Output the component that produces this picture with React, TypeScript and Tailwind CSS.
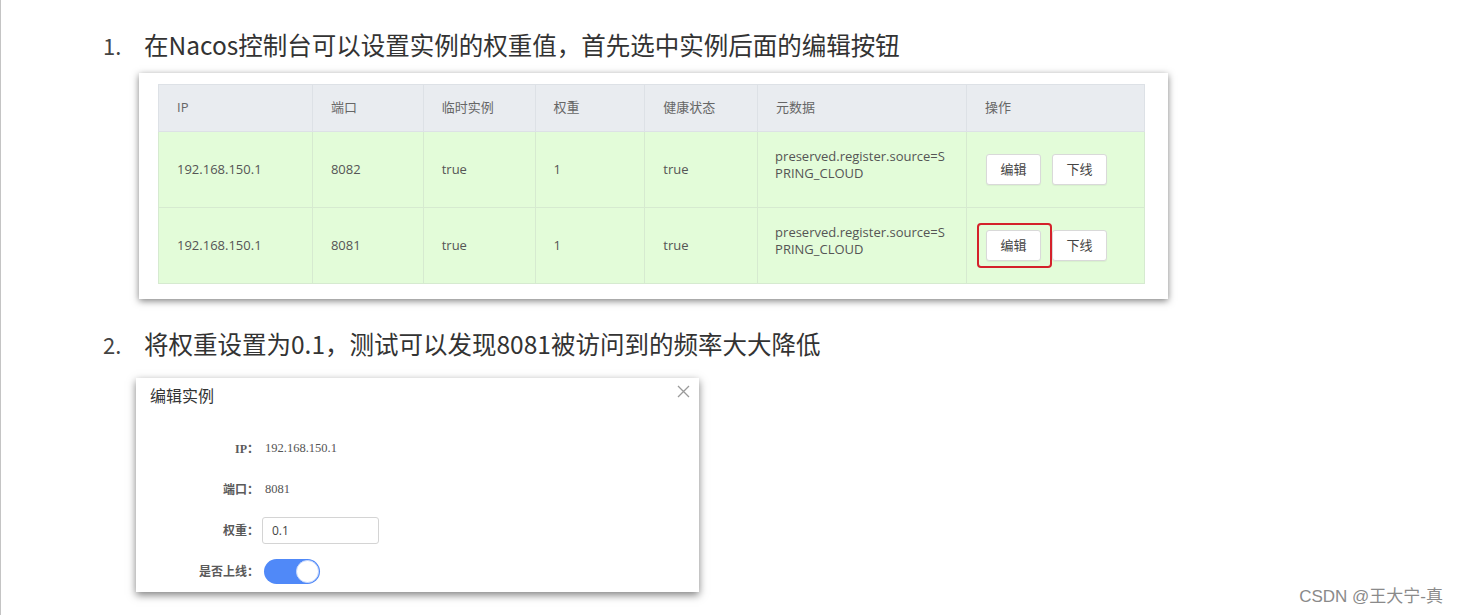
const cols = [
  { title: "IP", w: "w-[154px]" },
  { title: "端口", w: "w-[111px]" },
  { title: "临时实例", w: "w-[112px]" },
  { title: "权重", w: "w-[110px]" },
  { title: "健康状态", w: "w-[113px]" },
  { title: "元数据", w: "w-[209px]" },
  { title: "操作", w: "w-[178px]" },
];

const rows = [
  { ip: "192.168.150.1", port: "8082", highlight: false },
  { ip: "192.168.150.1", port: "8081", highlight: true },
];

function Btn({ label }: { label: string }) {
  return (
    <button className="w-[55px] h-[31px] bg-white border border-[#d9d9d9] rounded-[3px] text-[13px] text-[#444] shadow-[0_1px_1px_rgba(0,0,0,0.05)]">
      {label}
    </button>
  );
}

function InstanceTable() {
  return (
    <div className="ml-[36px] mt-[12px] w-[1029px] bg-white pt-[11px] pl-[19px] pr-[23px] pb-[15px] shadow-[0_2px_7px_rgba(0,0,0,0.5)]">
      <table
        className="border-collapse text-[13px] text-[#555]"
        style={{ fontFamily: '"Open Sans", "Noto Sans CJK SC", sans-serif' }}
      >
        <thead>
          <tr className="bg-[#e9ecf0] h-[47px]">
            {cols.map((c) => (
              <th
                key={c.title}
                className={`${c.w} border border-[#dde1e6] px-[18px] text-left font-normal text-[#666]`}
              >
                {c.title}
              </th>
            ))}
          </tr>
        </thead>
        <tbody>
          {rows.map((r) => (
            <tr key={r.port} className="bg-[#e3fcd9] h-[76px]">
              <td className="border border-[#d6ead0] px-[18px]">{r.ip}</td>
              <td className="border border-[#d6ead0] px-[18px]">{r.port}</td>
              <td className="border border-[#d6ead0] px-[18px]">true</td>
              <td className="border border-[#d6ead0] px-[18px]">1</td>
              <td className="border border-[#d6ead0] px-[18px]">true</td>
              <td className="border border-[#d6ead0] px-[17px] pb-[10px] leading-[17px]">
                <div>preserved.register.source=S</div>
                <div>PRING_CLOUD</div>
              </td>
              <td className="border border-[#d6ead0] pl-[19px]">
                <div className="flex items-center gap-[11px]">
                  <div className="relative">
                    <Btn label="编辑" />
                    {r.highlight && (
                      <div className="absolute left-[-9px] top-[-7px] w-[75px] h-[45px] border-2 border-[#d4212b] rounded-[4px]" />
                    )}
                  </div>
                  <Btn label="下线" />
                </div>
              </td>
            </tr>
          ))}
        </tbody>
      </table>
    </div>
  );
}

function FormRow({ label, children }: { label: string; children: React.ReactNode }) {
  return (
    <div className="flex items-center h-[41px]">
      <div className="w-[123px] text-right text-[12px] font-bold text-[#5a5a5a]">{label}</div>
      <div className="ml-[3px] flex items-center">{children}</div>
    </div>
  );
}

function EditDialog() {
  return (
    <div
      className="ml-[33px] mt-[18px] w-[563px] h-[214px] bg-white overflow-hidden shadow-[0_3px_8px_rgba(0,0,0,0.5)]"
      style={{ fontFamily: '"Liberation Serif", "Noto Sans CJK SC", serif' }}
    >
      <div className="flex items-start justify-between pl-[14px] pr-[9px] pt-[5px]">
        <div
          className="text-[16px] leading-[24px] text-[#333]"
          style={{ fontFamily: '"Noto Sans CJK SC", sans-serif' }}
        >
          编辑实例
        </div>
        <svg width="13" height="13" viewBox="0 0 13 13" className="mt-[2px]">
          <path d="M1 1 L12 12 M12 1 L1 12" stroke="#9a9a9a" strokeWidth="1.3" />
        </svg>
      </div>
      <div className="mt-[21px]">
        <FormRow label="IP：">
          <span className="pl-[3px] text-[12.5px] text-[#555]">192.168.150.1</span>
        </FormRow>
        <FormRow label="端口：">
          <span className="pl-[3px] text-[12.5px] text-[#555]">8081</span>
        </FormRow>
        <FormRow label="权重：">
          <div
            className="w-[117px] h-[27px] border border-[#d4d4d4] rounded-[3px] flex items-center px-[9px] text-[12px] text-[#444]"
            style={{ fontFamily: '"Open Sans", sans-serif' }}
          >
            0.1
          </div>
        </FormRow>
        <FormRow label="是否上线：">
          <div className="ml-[2px] w-[56px] h-[25px] rounded-full bg-[#5089f8] flex items-center justify-end pr-[1px]">
            <div className="w-[23px] h-[23px] rounded-full bg-white border border-[#c9d9fb]" />
          </div>
        </FormRow>
      </div>
    </div>
  );
}

function Heading({ num, text, mt }: { num: string; text: string; mt: string }) {
  return (
    <div
      className={`flex items-center ${mt} h-[32px] text-[24.5px] text-[#333]`}
      style={{ fontFamily: '"Noto Sans CJK SC", sans-serif' }}
    >
      <span className="w-[41px] text-[22px] text-[#444]">{num}</span>
      <span>{text}</span>
    </div>
  );
}

export default function App() {
  return (
    <div className="relative w-[1459px] h-[615px] overflow-hidden bg-white border-l border-[#c4c4c4]">
      <div className="pl-[102px]">
        <Heading num="1." text="在Nacos控制台可以设置实例的权重值，首先选中实例后面的编辑按钮" mt="mt-[29px]" />
        <InstanceTable />
        <Heading num="2." text="将权重设置为0.1，测试可以发现8081被访问到的频率大大降低" mt="mt-[29px]" />
        <EditDialog />
      </div>
      <div
        className="absolute right-[16px] bottom-[6px] text-[17px] text-[#8a8a8a]"
        style={{ fontFamily: '"Liberation Sans", "Noto Sans CJK SC", sans-serif' }}
      >
        CSDN @王大宁-真
      </div>
    </div>
  );
}
